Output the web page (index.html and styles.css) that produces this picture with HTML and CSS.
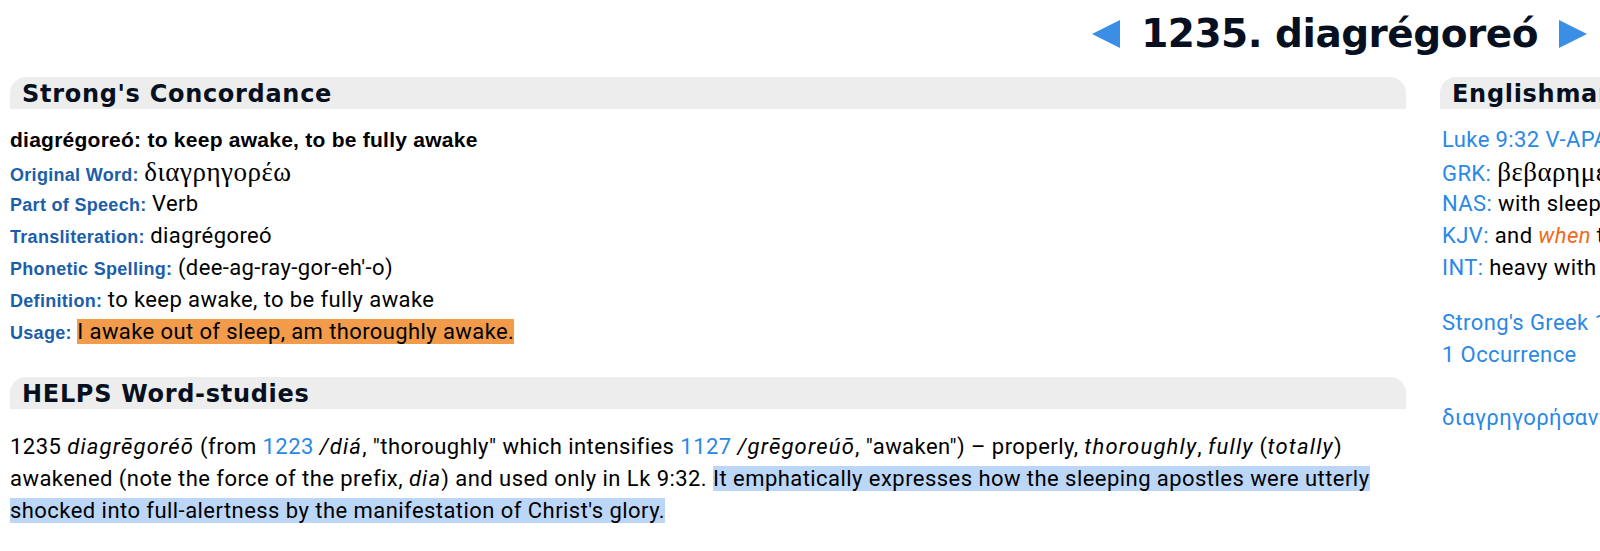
FILE: index.html
```html
<!DOCTYPE html>
<html lang="en">
<head>
<meta charset="utf-8">
<title>1235. diagrégoreó</title>
<link rel="stylesheet" href="styles.css">
</head>
<body>
<div class="page">
  <header class="title-bar">
    <a class="nav-arrow" href="#prev" aria-label="Previous">
      <svg width="28" height="28" viewBox="0 0 28 28"><polygon points="0,14 28,0 28,28" fill="#3a8ee6"/></svg>
    </a>
    <h1 class="title">1235. diagrégoreó</h1>
    <a class="nav-arrow" href="#next" aria-label="Next">
      <svg width="28" height="28" viewBox="0 0 28 28"><polygon points="0,0 28,14 0,28" fill="#3a8ee6"/></svg>
    </a>
  </header>

  <div class="columns">
    <main class="main-col">
      <h2 class="section-head">Strong's Concordance</h2>
      <div class="concordance">
        <div class="row lead">diagrégoreó: to keep awake, to be fully awake</div>
        <div class="row"><span class="label">Original Word:</span> <span class="greek">διαγρηγορέω</span></div>
        <div class="row"><span class="label">Part of Speech:</span> <span class="value">Verb</span></div>
        <div class="row"><span class="label">Transliteration:</span> <span class="value">diagrégoreó</span></div>
        <div class="row"><span class="label">Phonetic Spelling:</span> <span class="value">(dee-ag-ray-gor-eh'-o)</span></div>
        <div class="row"><span class="label">Definition:</span> <span class="value">to keep awake, to be fully awake</span></div>
        <div class="row"><span class="label">Usage:</span> <span class="value usage">I awake out of sleep, am thoroughly awake.</span></div>
      </div>

      <h2 class="section-head helps-head">HELPS Word-studies</h2>
      <p class="helps">1235 <i>diagrēgoréō</i> (from <a href="#1223">1223</a> <i>/diá</i>, "thoroughly" which intensifies <a href="#1127">1127</a> <i>/grēgoreúō</i>, "awaken") – properly, <i>thoroughly</i>, <i>fully</i> (<i>totally</i>) awakened (note the force of the prefix, <i>dia</i>) and used only in Lk 9:32. <span class="hl">It emphatically expresses how the sleeping apostles were utterly shocked into full-alertness by the manifestation of Christ's glory.</span></p>
    </main>

    <aside class="side-col">
      <h2 class="section-head">Englishman's Concordance</h2>
      <div class="eng">
        <div class="eng-row"><a href="#luke">Luke 9:32 V-APA-NMP</a></div>
        <div class="eng-row"><span class="eng-label">GRK:</span> <span class="greek-sm">βεβαρημένοι ὕπνῳ</span></div>
        <div class="eng-row"><span class="eng-label">NAS:</span> with sleep</div>
        <div class="eng-row"><span class="eng-label">KJV:</span> and <i class="kjv-it">when</i> they</div>
        <div class="eng-row"><span class="eng-label">INT:</span> heavy with sleep</div>
        <div class="eng-group">
          <div class="eng-row"><a href="#strongs">Strong's Greek 1235</a></div>
          <div class="eng-row"><a href="#occ">1 Occurrence</a></div>
        </div>
        <div class="eng-group2">
          <div class="eng-row"><a href="#word">διαγρηγορήσαντες — 1 Occ.</a></div>
        </div>
      </div>
    </aside>
  </div>
</div>
</body>
</html>
```

FILE: styles.css
```css
html, body {
  margin: 0;
  padding: 0;
  background: #ffffff;
  overflow: hidden;
}

body {
  font-family: Roboto, "Liberation Sans", Arial, sans-serif;
  color: #000;
}

a {
  color: #2a88e6;
  text-decoration: none;
}

.page {
  width: 1800px;
}

.title-bar {
  display: flex;
  align-items: center;
  justify-content: flex-end;
  gap: 21px;
  width: 1600px;
  box-sizing: border-box;
  padding: 14px 13px 0 0;
  height: 54px;
}

.nav-arrow {
  display: flex;
  align-items: center;
}

.title {
  margin: 0;
  font-family: "DejaVu Sans", Verdana, sans-serif;
  font-weight: bold;
  font-size: 39px;
  line-height: 40px;
  letter-spacing: -0.5px;
  color: #061020;
}

.columns {
  display: flex;
  gap: 34px;
  padding: 23px 0 0 10px;
}

.main-col {
  width: 1396px;
  flex: none;
}

.side-col {
  width: 340px;
  flex: none;
}

.section-head {
  margin: 0;
  background: #ededed;
  border-radius: 16px 16px 0 0;
  font-family: "DejaVu Sans", Verdana, sans-serif;
  font-weight: bold;
  font-size: 24px;
  line-height: 29px;
  letter-spacing: 0.7px;
  height: 32px;
  box-sizing: border-box;
  padding: 3px 0 0 12px;
  color: #061020;
  white-space: nowrap;
  overflow: hidden;
}

.concordance {
  padding-top: 15px;
}

.row {
  line-height: 32px;
  height: 32px;
  font-size: 22px;
  white-space: nowrap;
}

.row.lead {
  font-family: "Liberation Sans", Arial, sans-serif;
  font-weight: bold;
  font-size: 21px;
  letter-spacing: 0.25px;
}

.label {
  font-family: "Liberation Sans", Arial, sans-serif;
  font-weight: bold;
  font-size: 18px;
  letter-spacing: 0.3px;
  color: #1b5ea9;
}

.value {
  font-family: Roboto, sans-serif;
  font-size: 22px;
  letter-spacing: 0.4px;
}

.greek {
  font-family: "Liberation Serif", "Times New Roman", serif;
  font-size: 27px;
  letter-spacing: 0.5px;
}

.usage {
  background: #f29b4a;
}

.helps-head {
  margin-top: 29px;
}

.helps {
  margin: 22px 0 0;
  font-family: Roboto, sans-serif;
  font-size: 22px;
  letter-spacing: 0.45px;
  line-height: 32px;
  color: #000;
}

.helps i {
  letter-spacing: 1.2px;
}

.hl {
  background: #bcd6f8;
}

.eng {
  padding-top: 15px;
  padding-left: 2px;
}

.eng-row {
  line-height: 32px;
  height: 32px;
  font-size: 22px;
  letter-spacing: 0.4px;
  white-space: nowrap;
}

.eng-label {
  color: #2a88e6;
}

.greek-sm {
  font-family: "Liberation Serif", "Times New Roman", serif;
  font-size: 27px;
  letter-spacing: 0.5px;
}

.kjv-it {
  color: #f06a1a;
}

.eng-group {
  margin-top: 23px;
}

.eng-group2 {
  margin-top: 31px;
}
```
